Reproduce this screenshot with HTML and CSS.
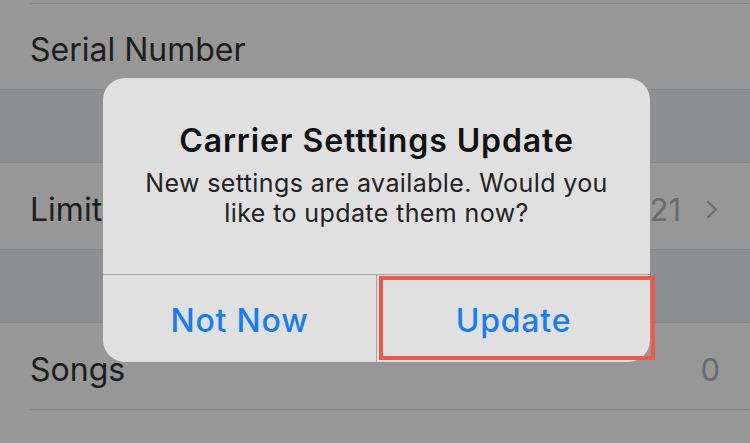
FILE: index.html
```html
<!DOCTYPE html>
<html lang="en">

<head>
  <meta charset="UTF-8">
  <meta name="viewport" content="width=device-width, initial-scale=1.0">
  <title>Carrier Settings Update</title>
  <link rel="stylesheet" href="styles.css">
</head>

<body>
  <div id="screen">
    <div class="list">
      <div class="row row-stub"></div>
      <div class="row">
        <span class="label">Serial Number</span>
      </div>
      <div class="group-gap"></div>
      <div class="row">
        <span class="label">Limit</span>
        <span class="value">21</span>
        <svg class="chevron" width="16" height="20" viewBox="0 0 16 20">
          <polyline points="4,3 12,10.5 4,18" fill="none" stroke="#6e6f70" stroke-width="2.2" stroke-linecap="round" stroke-linejoin="round" />
        </svg>
      </div>
      <div class="group-gap"></div>
      <div class="row">
        <span class="label">Songs</span>
        <span class="value">0</span>
      </div>
      <div class="row row-rest"></div>
    </div>

    <!-- alert sits over the list -->
    <div id="alert">
      <div class="alert-body">
        <h2 class="alert-title">Carrier Setttings Update</h2>
        <p class="alert-text">New settings are available. Would you<br>like to update them now?</p>
      </div>
      <div class="alert-buttons">
        <button class="alert-button">Not Now</button>
        <button class="alert-button highlighted">Update</button>
      </div>
    </div>
  </div>
</body>

</html>
```

FILE: styles.css
```css
body {
  margin: 0;
  font-family: Inter, "Liberation Sans", Arial, sans-serif;
  background-color: #969796;
}

#screen {
  position: relative;
  width: 750px;
  height: 443px;
  overflow: hidden;
}

.list {
  display: flex;
  flex-direction: column;
}

.row {
  display: flex;
  align-items: center;
  gap: 23px;
  height: 86px;
  padding: 0 30px 0 30px;
  background-color: #969796;
  position: relative;
}

.row + .row::before {
  content: "";
  position: absolute;
  top: 0;
  left: 30px;
  right: 0;
  height: 1px;
  background-color: #868787;
}

.row-stub {
  height: 3px;
}

.row-rest {
  height: 40px;
}

.label {
  flex: 1;
  font-size: 32px;
  color: #1d1d1d;
  padding-top: 7px;
}

.value {
  font-size: 31px;
  color: #6a6b6c;
  padding-top: 7px;
}

.chevron {
  margin-left: 0;
  margin-right: 0;
  margin-top: 6px;
}

.group-gap {
  height: 72px;
  background-color: #8e8f92;
  border-top: 1px solid #868787;
  border-bottom: 1px solid #868787;
}

#alert {
  position: absolute;
  left: 103px;
  top: 78px;
  width: 547px;
  height: 284px;
  background-color: #e0e0e0;
  border-radius: 22px;
  display: flex;
  flex-direction: column;
}

.alert-body {
  height: 197px;
  box-sizing: border-box;
  padding-top: 45px;
  text-align: center;
  border-bottom: 1px solid #a6a6a6;
}

.alert-title {
  margin: 0;
  font-size: 32px;
  line-height: 36px;
  font-weight: 600;
  letter-spacing: 0.9px;
  color: #121212;
}

.alert-text {
  margin: 9px 0 0 0;
  font-size: 25px;
  line-height: 30px;
  letter-spacing: 0.4px;
  color: #222;
}

.alert-buttons {
  flex: 1;
  display: flex;
}

.alert-button {
  flex: 1;
  position: relative;
  border: none;
  background: none;
  padding: 3px 0 0 0;
  font-family: inherit;
  font-size: 32px;
  font-weight: 500;
  letter-spacing: 0.8px;
  color: #1b7cf0;
}

.alert-button + .alert-button {
  border-left: 1px solid #a6a6a6;
}

.alert-button.highlighted::after {
  content: "";
  position: absolute;
  left: 2px;
  right: -5px;
  top: 1px;
  bottom: 2px;
  border: 4px solid #f0574b;
}
```
